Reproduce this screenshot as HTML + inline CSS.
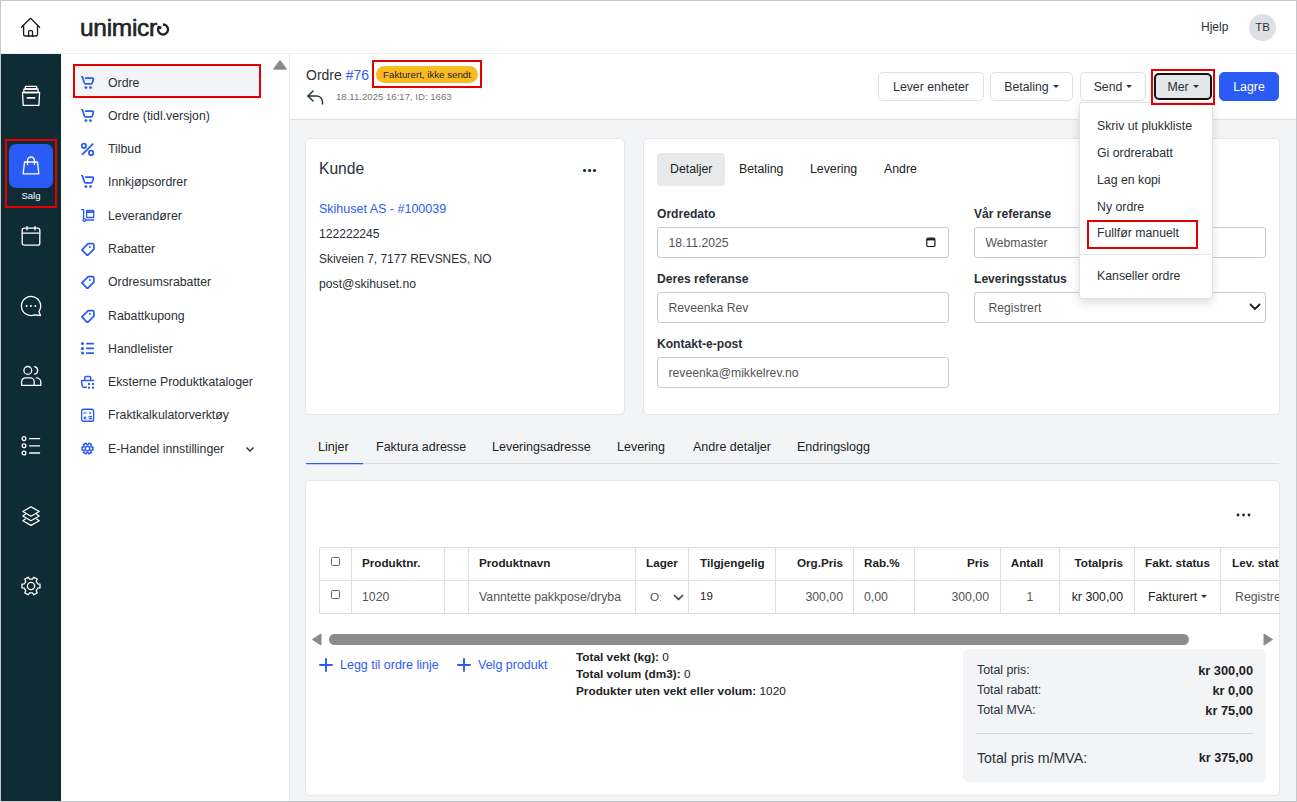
<!DOCTYPE html>
<html><head><meta charset="utf-8"><style>
*{box-sizing:border-box;margin:0;padding:0}
html,body{width:1297px;height:802px;overflow:hidden;background:#fff}
body{font-family:"Liberation Sans",sans-serif;color:#222;position:relative;font-size:13px}
.a{position:absolute;white-space:nowrap}
#frame{position:absolute;left:0;top:0;width:1297px;height:802px;border:1px solid #c5c9ce;z-index:100;pointer-events:none}
.mi{position:absolute;font-size:12.3px;color:#2b2f36;white-space:nowrap}
.card{position:absolute;background:#fff;border:1px solid #e4e6e9;border-radius:5px}
.btn{position:absolute;top:72px;height:29px;background:#fff;border:1px solid #dcdfe3;border-radius:5px;font-size:12.3px;color:#2b2f36;text-align:center;line-height:28px;white-space:nowrap}
.car{display:inline-block;width:0;height:0;border-left:3px solid transparent;border-right:3px solid transparent;border-top:3.5px solid #333;vertical-align:middle;margin-left:4px;position:relative;top:-1px}
.lbl{position:absolute;font-weight:bold;font-size:12.1px;color:#2b2f36;white-space:nowrap}
.inp{position:absolute;height:31px;border:1px solid #cacccf;border-radius:3px;background:#fff;font-size:12.2px;color:#555;padding-left:10.5px;line-height:30px;white-space:nowrap}
.th{position:absolute;font-weight:bold;font-size:11.7px;color:#222;white-space:nowrap}
.td{position:absolute;font-size:12.3px;color:#555;white-space:nowrap}
.dd{position:absolute;left:1097px;font-size:12.3px;color:#2b2f36;white-space:nowrap}
.vl{position:absolute;width:1px;background:#dedede}
.hl{position:absolute;height:1px;background:#dedede}
.cb{position:absolute;width:9px;height:9px;border:1px solid #666;border-radius:1.5px;background:#fff}
</style></head><body>
<div id="frame"></div>
<div class="a" style="left:0;top:0;width:1297px;height:54px;background:#fff;border-bottom:1px solid #eceef0"></div>
<svg class="a" style="left:15px;top:12px" width="32" height="30" viewBox="15 12 32 30" fill="none" stroke="#1a1a1a" stroke-width="1.3" stroke-linejoin="round" stroke-linecap="round"><path d="M21.4 27.2 L30.5 18.3 L39.6 27.2"/><path d="M23.6 25.6 V34.6 Q23.6 36 25 36 H36.1 Q37.5 36 37.5 34.6 V25.6"/><path d="M28.6 36 V31.6 Q28.6 30.6 29.6 30.6 H31.5 Q32.5 30.6 32.5 31.6 V36"/></svg>
<div class="a" style="left:80px;top:14px;font-size:24.5px;color:#222;letter-spacing:-0.3px;-webkit-text-stroke:0.6px #222">unimicr</div>
<svg class="a" style="left:156px;top:22px" width="15" height="15" viewBox="0 0 15 15" fill="none" stroke="#222" stroke-width="2.4"><path d="M7 2.5 A5 5 0 1 1 2.67 5 L5.4 6"/></svg>
<div class="a" style="left:1201px;top:20px;font-size:12px;color:#2b2f36">Hjelp</div>
<div class="a" style="left:1249px;top:14px;width:27px;height:27px;border-radius:50%;background:#dde1e6;font-size:11.5px;color:#333;text-align:center;line-height:27px">TB</div>
<div class="a" style="left:1px;top:54px;width:60px;height:748px;background:#0f2b34"></div>
<svg class="a" style="left:15px;top:80px" width="32" height="32" viewBox="15 80 32 32" fill="none" stroke="#fff" stroke-width="1.3" stroke-linejoin="round" stroke-linecap="round"><rect x="25.3" y="86.4" width="11.4" height="2.6" rx="0.7"/><rect x="23.9" y="89" width="14.2" height="3.5" rx="0.7"/><path d="M22.5 92.5 H39.6 L38.9 105.4 H23.2 Z"/><path d="M27.4 97.9 H34.6" stroke-width="1.6"/></svg>
<div class="a" style="left:9px;top:144px;width:44px;height:44px;background:#2a5cf5;border-radius:7px"></div>
<svg class="a" style="left:22px;top:155px" width="18" height="20" viewBox="0 0 18 20" fill="none" stroke="#fff" stroke-width="1.3" stroke-linejoin="round" stroke-linecap="round"><path d="M2.5 7 H15.5 L16.8 18.8 H1.2 Z"/><path d="M5.5 9.5 V5.5 A3.5 3.5 0 0 1 12.5 5.5 V9.5"/></svg>
<div class="a" style="left:0;top:190px;width:62px;text-align:center;font-size:9.5px;color:#fff">Salg</div>
<svg class="a" style="left:21px;top:226px" width="20" height="20" viewBox="0 0 20 20" fill="none" stroke="#fff" stroke-width="1.3" stroke-linejoin="round" stroke-linecap="round"><rect x="1.2" y="2.2" width="17.6" height="17" rx="2"/><path d="M1.2 7.2 H18.8 M6 0.6 V3.8 M14 0.6 V3.8"/></svg>
<svg class="a" style="left:15px;top:290px" width="32" height="32" viewBox="15 290 32 32" fill="none" stroke="#fff" stroke-width="1.3" stroke-linejoin="round" stroke-linecap="round"><path d="M38.9 311.5 A9.6 9.6 0 1 0 34.6 314.9 L40.5 315.5 Z"/><g fill="#fff" stroke="none"><circle cx="26.6" cy="306" r="1"/><circle cx="31" cy="306" r="1"/><circle cx="35.4" cy="306" r="1"/></g></svg>
<svg class="a" style="left:15px;top:360px" width="32" height="32" viewBox="15 360 32 32" fill="none" stroke="#fff" stroke-width="1.3" stroke-linejoin="round" stroke-linecap="round"><circle cx="27.8" cy="370.4" r="3.9"/><path d="M34.6 366.6 A3.9 3.9 0 0 1 34.6 374.2"/><path d="M21.6 385.3 V381.8 A3.9 3.9 0 0 1 25.5 377.9 H30.3 A3.9 3.9 0 0 1 34.2 381.8 V385.3 Z"/><path d="M36.4 377.9 A4.4 4.4 0 0 1 40.8 382.3 V385.3 H34.2"/></svg>
<svg class="a" style="left:21px;top:436px" width="20" height="20" viewBox="0 0 20 20" fill="none" stroke="#fff" stroke-width="1.3" stroke-linejoin="round" stroke-linecap="round"><circle cx="3" cy="2.6" r="1.9"/><circle cx="3" cy="9.8" r="1.9"/><circle cx="3" cy="17" r="1.9"/><path d="M8.6 2.6 H18.6 M8.6 9.8 H18.6 M8.6 17 H18.6"/></svg>
<svg class="a" style="left:22px;top:506px" width="18" height="21" viewBox="0 0 18 21" fill="none" stroke="#fff" stroke-width="1.3" stroke-linejoin="round" stroke-linecap="round"><path d="M9 0.8 L17.2 5.5 L9 10.2 L0.8 5.5 Z"/><path d="M3.3 8.3 L0.8 10 L9 14.7 L17.2 10 L14.7 8.3"/><path d="M3.3 13 L0.8 14.7 L9 19.4 L17.2 14.7 L14.7 13"/></svg>
<svg class="a" style="left:15px;top:570px" width="32" height="32" viewBox="15 570 32 32" fill="none" stroke="#fff" stroke-width="1.3" stroke-linejoin="round"><path d="M37.64 588.23 L40.00 587.92 L40.00 584.08 L37.64 583.77 L36.25 581.37 L37.16 579.17 L33.84 577.25 L32.39 579.14 L29.61 579.14 L28.16 577.25 L24.84 579.17 L25.75 581.37 L24.36 583.77 L22.00 584.08 L22.00 587.92 L24.36 588.23 L25.75 590.63 L24.84 592.83 L28.16 594.75 L29.61 592.86 L32.39 592.86 L33.84 594.75 L37.16 592.83 L36.25 590.63 Z"/><circle cx="31" cy="586" r="3.6"/></svg>
<div class="a" style="left:61px;top:54px;width:229px;height:748px;background:#fff;border-right:1px solid #e5e7eb"></div>
<div class="a" style="left:75px;top:66px;width:184px;height:30px;background:#f3f4f6"></div>
<div class="a" style="left:81px;top:76px;width:14px;height:14px;line-height:0"><svg width="14" height="14" viewBox="0 0 14 14" fill="none" stroke="#2a5bf0" stroke-width="1.7" stroke-linecap="round" stroke-linejoin="round"><path d="M0.5 0.5 Q1.2 0.5 1.6 1.3 L3.4 7 Q3.7 7.8 4.5 7.8 H10.2 Q11 7.8 11.3 7 L12.3 3.6 Q12.6 2.1 11.2 2.1 H4.6"/><circle cx="4.9" cy="11.6" r="1.45" fill="#2a5bf0" stroke="none"/><circle cx="9.5" cy="11.6" r="1.45" fill="#2a5bf0" stroke="none"/></svg></div>
<div class="mi" style="left:108px;top:76px">Ordre</div>
<div class="a" style="left:81px;top:109px;width:14px;height:14px;line-height:0"><svg width="14" height="14" viewBox="0 0 14 14" fill="none" stroke="#2a5bf0" stroke-width="1.7" stroke-linecap="round" stroke-linejoin="round"><path d="M0.5 0.5 Q1.2 0.5 1.6 1.3 L3.4 7 Q3.7 7.8 4.5 7.8 H10.2 Q11 7.8 11.3 7 L12.3 3.6 Q12.6 2.1 11.2 2.1 H4.6"/><circle cx="4.9" cy="11.6" r="1.45" fill="#2a5bf0" stroke="none"/><circle cx="9.5" cy="11.6" r="1.45" fill="#2a5bf0" stroke="none"/></svg></div>
<div class="mi" style="left:108px;top:109px">Ordre (tidl.versjon)</div>
<div class="a" style="left:81px;top:142px;width:14px;height:14px;line-height:0"><svg width="14" height="14" viewBox="0 0 14 14" fill="none" stroke="#2a5bf0" stroke-width="1.8"><path d="M0.9 12.8 L12.2 1.6"/><circle cx="2.9" cy="3.8" r="2.2"/><circle cx="10.1" cy="10.9" r="2.2"/></svg></div>
<div class="mi" style="left:108px;top:142px">Tilbud</div>
<div class="a" style="left:81px;top:175px;width:14px;height:14px;line-height:0"><svg width="14" height="14" viewBox="0 0 14 14" fill="none" stroke="#2a5bf0" stroke-width="1.7" stroke-linecap="round" stroke-linejoin="round"><path d="M0.5 0.5 Q1.2 0.5 1.6 1.3 L3.4 7 Q3.7 7.8 4.5 7.8 H10.2 Q11 7.8 11.3 7 L12.3 3.6 Q12.6 2.1 11.2 2.1 H4.6"/><circle cx="4.9" cy="11.6" r="1.45" fill="#2a5bf0" stroke="none"/><circle cx="9.5" cy="11.6" r="1.45" fill="#2a5bf0" stroke="none"/></svg></div>
<div class="mi" style="left:108px;top:175px">Innkjøpsordrer</div>
<div class="a" style="left:81px;top:209px;width:14px;height:14px;line-height:0"><svg width="14" height="14" viewBox="0 0 14 14" fill="none" stroke="#2a5bf0" stroke-width="1.3" stroke-linejoin="round" stroke-linecap="round"><path d="M0.5 0.5 H2.6 V9.6"/><circle cx="3.3" cy="11" r="1.35"/><path d="M4.8 11 H12.7"/><rect x="5.6" y="1.5" width="7.1" height="7" rx="0.6"/><path d="M5.6 3.1 H12.7" stroke-width="1.6"/></svg></div>
<div class="mi" style="left:108px;top:209px">Leverandører</div>
<div class="a" style="left:81px;top:242px;width:14px;height:14px;line-height:0"><svg width="14" height="14" viewBox="0 0 14 14" fill="none" stroke="#2a5bf0" stroke-width="1.7" stroke-linejoin="round"><path d="M0.9 7.8 L7.2 1.6 H11.6 Q12.9 1.6 12.9 2.9 V7.2 L6.4 13.6 Z"/><circle cx="8.9" cy="4.9" r="1" fill="#2a5bf0" stroke="none"/></svg></div>
<div class="mi" style="left:108px;top:242px">Rabatter</div>
<div class="a" style="left:81px;top:275px;width:14px;height:14px;line-height:0"><svg width="14" height="14" viewBox="0 0 14 14" fill="none" stroke="#2a5bf0" stroke-width="1.7" stroke-linejoin="round"><path d="M0.9 7.8 L7.2 1.6 H11.6 Q12.9 1.6 12.9 2.9 V7.2 L6.4 13.6 Z"/><circle cx="8.9" cy="4.9" r="1" fill="#2a5bf0" stroke="none"/></svg></div>
<div class="mi" style="left:108px;top:275px">Ordresumsrabatter</div>
<div class="a" style="left:81px;top:309px;width:14px;height:14px;line-height:0"><svg width="14" height="14" viewBox="0 0 14 14" fill="none" stroke="#2a5bf0" stroke-width="1.7" stroke-linejoin="round"><path d="M0.9 7.8 L7.2 1.6 H11.6 Q12.9 1.6 12.9 2.9 V7.2 L6.4 13.6 Z"/><circle cx="8.9" cy="4.9" r="1" fill="#2a5bf0" stroke="none"/></svg></div>
<div class="mi" style="left:108px;top:309px">Rabattkupong</div>
<div class="a" style="left:81px;top:342px;width:14px;height:14px;line-height:0"><svg width="14" height="14" viewBox="0 0 14 14" fill="#2a5bf0"><circle cx="1.5" cy="1.6" r="1.5"/><circle cx="1.5" cy="6.4" r="1.5"/><circle cx="1.5" cy="11.1" r="1.5"/><rect x="5.1" y="0.8" width="7.8" height="1.8" rx="0.3"/><rect x="5.1" y="5.5" width="7.8" height="1.8" rx="0.3"/><rect x="5.1" y="10.2" width="7.8" height="1.8" rx="0.3"/></svg></div>
<div class="mi" style="left:108px;top:342px">Handlelister</div>
<div class="a" style="left:81px;top:375px;width:14px;height:14px;line-height:0"><svg width="14" height="14" viewBox="0 0 14 14" fill="none" stroke="#2a5bf0" stroke-width="1.4" stroke-linejoin="round" stroke-linecap="round"><path d="M3.8 5.5 V2.6 Q3.8 1.5 4.9 1.5 H8.6 Q9.7 1.5 9.7 2.6 V5.5 M0.5 5.5 H12.7 M0.5 5.5 L1.3 11.4 Q1.5 12.2 2.3 12.2 H5.4"/><g fill="#2a5bf0" stroke="none"><rect x="7" y="8" width="2" height="2"/><rect x="11" y="8" width="2" height="2"/><rect x="7" y="11.7" width="2" height="2"/><rect x="11" y="11.7" width="2" height="2"/></g></svg></div>
<div class="mi" style="left:108px;top:375px">Eksterne Produktkataloger</div>
<div class="a" style="left:81px;top:408px;width:14px;height:14px;line-height:0"><svg width="14" height="14" viewBox="0 0 14 14" fill="none" stroke="#2a5bf0" stroke-width="1.4"><rect x="0.6" y="1.3" width="12" height="11.9" rx="1.8"/><path d="M2.2 5 H5.6 M3.9 8.3 V11.7 M2.2 10 H5.6 M7.6 8.6 H11 M7.6 10.6 H11" stroke-width="1.2"/><rect x="8.2" y="4.2" width="1.7" height="1.7" fill="#2a5bf0" stroke="none"/></svg></div>
<div class="mi" style="left:108px;top:408px">Fraktkalkulatorverktøy</div>
<div class="a" style="left:81px;top:442px;width:14px;height:14px;line-height:0"><svg width="14" height="14" viewBox="0 0 14 14" fill="none" stroke="#2a5bf0" stroke-width="1.5" stroke-linejoin="round"><path d="M10.27 8.11 L11.93 7.89 L11.93 5.11 L10.27 4.89 L9.78 4.04 L10.41 2.49 L8.01 1.11 L6.99 2.43 L6.01 2.43 L4.99 1.11 L2.59 2.49 L3.22 4.04 L2.73 4.89 L1.07 5.11 L1.07 7.89 L2.73 8.11 L3.22 8.96 L2.59 10.51 L4.99 11.89 L6.01 10.57 L6.99 10.57 L8.01 11.89 L10.41 10.51 L9.78 8.96 Z"/><circle cx="6.5" cy="6.5" r="2.3"/></svg></div>
<div class="mi" style="left:108px;top:442px">E-Handel innstillinger</div>
<svg class="a" style="left:245px;top:446px" width="10" height="7" viewBox="0 0 10 7" fill="none" stroke="#333" stroke-width="1.5"><path d="M1.5 1.5 L5 5 L8.5 1.5"/></svg>
<svg class="a" style="left:273px;top:60px" width="14" height="10" viewBox="0 0 14 10"><path d="M7 1 L13 9 H1 Z" fill="#8a8a8a" stroke="#8a8a8a" stroke-width="1.5" stroke-linejoin="round"/></svg>
<div class="a" style="left:290px;top:54px;width:1007px;height:748px;background:#f3f4f6"></div>
<div class="a" style="left:290px;top:54px;width:1007px;height:66px;background:#fff;border-bottom:1px solid #dde0e4"></div>
<div class="a" style="left:306px;top:67px;font-size:14px;color:#2b2f36">Ordre <span style="color:#2d5cf2">#76</span></div>
<div class="a" style="left:376px;top:66px;width:102px;height:17px;border-radius:9px;background:#fabb22;font-size:9.7px;color:#222;text-align:center;line-height:17px">Fakturert, ikke sendt</div>
<svg class="a" style="left:307px;top:90px" width="17" height="15" viewBox="0 0 17 15" fill="none" stroke="#1f3a40" stroke-width="1.5" stroke-linecap="round" stroke-linejoin="round"><path d="M6 1 L1 6 L6 11"/><path d="M1 6 H9 A6 6 0 0 1 15.5 12 V14"/></svg>
<div class="a" style="left:336px;top:91px;font-size:9.6px;color:#777">18.11.2025 16:17, ID: 1663</div>
<div class="btn" style="left:878px;width:106px">Lever enheter</div>
<div class="btn" style="left:990px;width:83px">Betaling<span class="car"></span></div>
<div class="btn" style="left:1080px;width:66px">Send<span class="car"></span></div>
<div class="btn" style="left:1154px;top:73px;width:58px;height:27px;border:2px solid #111;background:#e4e6e8;line-height:24px">Mer<span class="car"></span></div>
<div class="btn" style="left:1219px;width:60px;background:#2a5cf5;border-color:#2a5cf5;color:#fff">Lagre</div>
<div class="card" style="left:305px;top:138px;width:320px;height:277px"></div>
<div class="a" style="left:319px;top:160px;font-size:15.6px;color:#2b2f36">Kunde</div>
<svg class="a" style="left:582px;top:168px" width="15" height="5" viewBox="0 0 15 5" fill="#0f2b34"><circle cx="2.55" cy="2.5" r="1.6"/><circle cx="7.6" cy="2.5" r="1.6"/><circle cx="12.5" cy="2.5" r="1.6"/></svg>
<div class="a" style="left:319px;top:202px;font-size:12.5px;color:#2d5cf2">Skihuset AS - #100039</div>
<div class="a" style="left:319px;top:227px;font-size:12.1px;color:#2b2f36">122222245</div>
<div class="a" style="left:319px;top:252px;font-size:11.9px;color:#2b2f36">Skiveien 7, 7177 REVSNES, NO</div>
<div class="a" style="left:319px;top:277px;font-size:12.2px;color:#2b2f36">post@skihuset.no</div>
<div class="card" style="left:643px;top:138px;width:637px;height:277px"></div>
<div class="a" style="left:657px;top:153px;width:68px;height:33px;background:#e8e9eb;border-radius:4px"></div>
<div class="a" style="left:670px;top:162px;font-size:12.3px;color:#222">Detaljer</div>
<div class="a" style="left:739px;top:162px;font-size:12.3px;color:#222">Betaling</div>
<div class="a" style="left:810px;top:162px;font-size:12.3px;color:#222">Levering</div>
<div class="a" style="left:884px;top:162px;font-size:12.3px;color:#222">Andre</div>
<div class="lbl" style="left:657px;top:207px">Ordredato</div>
<div class="inp" style="left:657px;top:227px;width:292px;color:#555">18.11.2025</div>
<svg class="a" style="left:926px;top:237px" width="10" height="10" viewBox="0 0 10 10" fill="none" stroke="#1a1a1a" stroke-width="1.2"><rect x="0.8" y="1.2" width="8.1" height="8.3" rx="1.3"/><path d="M0.8 2.4 H8.9" stroke-width="2"/></svg>
<div class="lbl" style="left:657px;top:272px">Deres referanse</div>
<div class="inp" style="left:657px;top:292px;width:292px">Reveenka Rev</div>
<div class="lbl" style="left:657px;top:337px">Kontakt-e-post</div>
<div class="inp" style="left:657px;top:357px;width:292px">reveenka@mikkelrev.no</div>
<div class="lbl" style="left:974px;top:207px">Vår referanse</div>
<div class="inp" style="left:974px;top:227px;width:292px">Webmaster</div>
<div class="lbl" style="left:974px;top:272px">Leveringsstatus</div>
<div class="inp" style="left:974px;top:292px;width:292px;padding-left:13.5px">Registrert</div>
<svg class="a" style="left:1249px;top:303px" width="12" height="8" viewBox="0 0 12 8" fill="none" stroke="#222" stroke-width="1.8" stroke-linecap="round" stroke-linejoin="round"><path d="M1.5 1.5 L6 6 L10.5 1.5"/></svg>
<div class="a" style="left:306px;top:463px;width:973px;height:1px;background:#d9dce0"></div>
<div class="a" style="left:306px;top:463px;width:57px;height:1px;background:#2a5bf5;box-shadow:0 0.5px 0 rgba(42,91,245,0.5)"></div>
<div class="a" style="left:318px;top:440px;font-size:12.5px;color:#222">Linjer</div>
<div class="a" style="left:376px;top:440px;font-size:12.5px;color:#222">Faktura adresse</div>
<div class="a" style="left:492px;top:440px;font-size:12.5px;color:#222">Leveringsadresse</div>
<div class="a" style="left:617px;top:440px;font-size:12.5px;color:#222">Levering</div>
<div class="a" style="left:693px;top:440px;font-size:12.5px;color:#222">Andre detaljer</div>
<div class="a" style="left:797px;top:440px;font-size:12.5px;color:#222">Endringslogg</div>
<div class="card" style="left:305px;top:480px;width:975px;height:316px;overflow:hidden">
</div>
<div class="a" style="left:1236px;top:513px;width:15px;height:4px;line-height:0"><svg width="15" height="4" viewBox="0 0 15 4" fill="#222"><circle cx="2" cy="2" r="1.4"/><circle cx="7.5" cy="2" r="1.4"/><circle cx="13" cy="2" r="1.4"/></svg></div>
<div class="a" style="left:319px;top:547px;width:960px;height:67px;overflow:hidden">
<div class="vl" style="left:0px;top:0;height:67px"></div>
<div class="vl" style="left:32px;top:0;height:67px"></div>
<div class="vl" style="left:125px;top:0;height:67px"></div>
<div class="vl" style="left:149px;top:0;height:67px"></div>
<div class="vl" style="left:316px;top:0;height:67px"></div>
<div class="vl" style="left:369px;top:0;height:67px"></div>
<div class="vl" style="left:456px;top:0;height:67px"></div>
<div class="vl" style="left:534px;top:0;height:67px"></div>
<div class="vl" style="left:595px;top:0;height:67px"></div>
<div class="vl" style="left:681px;top:0;height:67px"></div>
<div class="vl" style="left:740px;top:0;height:67px"></div>
<div class="vl" style="left:815px;top:0;height:67px"></div>
<div class="vl" style="left:901px;top:0;height:67px"></div>
<div class="vl" style="left:981px;top:0;height:67px"></div>
<div class="hl" style="left:0;top:0px;width:1000px"></div>
<div class="hl" style="left:0;top:33px;width:1000px"></div>
<div class="hl" style="left:0;top:66px;width:1000px"></div>
</div>
<div class="cb" style="left:331px;top:557px"></div>
<div class="cb" style="left:331px;top:590px"></div>
<div class="a" style="left:0;top:0;width:1279px;height:802px;overflow:hidden">
<div class="th" style="left:362px;top:556px;">Produktnr.</div>
<div class="th" style="left:479px;top:556px;">Produktnavn</div>
<div class="th" style="left:646px;top:556px;">Lager</div>
<div class="th" style="left:700px;top:556px;">Tilgjengelig</div>
<div class="th" style="left:543px;width:300px;text-align:right;top:556px;">Org.Pris</div>
<div class="th" style="left:864px;top:556px;">Rab.%</div>
<div class="th" style="left:689px;width:300px;text-align:right;top:556px;">Pris</div>
<div class="th" style="left:877px;width:300px;text-align:center;top:556px;">Antall</div>
<div class="th" style="left:823px;width:300px;text-align:right;top:556px;">Totalpris</div>
<div class="th" style="left:1145px;top:556px;">Fakt. status</div>
<div class="th" style="left:1232px;top:556px;">Lev. status</div>
<div class="td" style="left:362px;top:590px;">1020</div>
<div class="td" style="left:479px;top:590px;">Vanntette pakkpose/dryba</div>
<div class="td" style="left:700px;top:590px;color:#222;"><span style="font-size:11.5px;position:relative;top:-1px">19</span></div>
<div class="td" style="left:543px;width:300px;text-align:right;top:590px;">300,00</div>
<div class="td" style="left:864px;top:590px;">0,00</div>
<div class="td" style="left:689px;width:300px;text-align:right;top:590px;">300,00</div>
<div class="td" style="left:880px;width:300px;text-align:center;top:590px;">1</div>
<div class="td" style="left:823px;width:300px;text-align:right;top:590px;color:#222;">kr 300,00</div>
<div class="td" style="left:1148px;top:590px;color:#222;">Fakturert<span class="car"></span></div>
<div class="td" style="left:1235px;top:590px;">Registrert</div>
</div>
<div class="td" style="left:650px;top:590px;width:11px;overflow:hidden;font-size:11.8px">O:</div>
<svg class="a" style="left:673px;top:594px" width="11" height="7" viewBox="0 0 11 7" fill="none" stroke="#444" stroke-width="1.7" stroke-linecap="round" stroke-linejoin="round"><path d="M1.5 1.5 L5.5 5.5 L9.5 1.5"/></svg>
<svg class="a" style="left:311px;top:633px" width="11" height="13" viewBox="0 0 11 13"><path d="M10 1 V12 L1.5 6.5 Z" fill="#8a8a8a" stroke="#8a8a8a" stroke-linejoin="round"/></svg>
<div class="a" style="left:329px;top:634px;width:860px;height:11px;border-radius:6px;background:#8c8c8c"></div>
<svg class="a" style="left:1263px;top:633px" width="11" height="13" viewBox="0 0 11 13"><path d="M1 1 V12 L9.5 6.5 Z" fill="#8a8a8a" stroke="#8a8a8a" stroke-linejoin="round"/></svg>
<div class="a" style="left:319px;top:658px;line-height:0"><svg width="14" height="14" viewBox="0 0 14 14" fill="none" stroke="#2a5bf0" stroke-width="1.9" stroke-linecap="round"><path d="M7 1 V13 M1 7 H13"/></svg></div>
<div class="a" style="left:340px;top:658px;font-size:12.5px;color:#2d5cf2">Legg til ordre linje</div>
<div class="a" style="left:457px;top:658px;line-height:0"><svg width="14" height="14" viewBox="0 0 14 14" fill="none" stroke="#2a5bf0" stroke-width="1.9" stroke-linecap="round"><path d="M7 1 V13 M1 7 H13"/></svg></div>
<div class="a" style="left:478px;top:658px;font-size:12.5px;color:#2d5cf2">Velg produkt</div>
<div class="a" style="left:576px;top:650px;font-size:11.8px;color:#222"><b>Total vekt (kg):</b> 0</div>
<div class="a" style="left:576px;top:667px;font-size:11.8px;color:#222"><b>Total volum (dm3):</b> 0</div>
<div class="a" style="left:576px;top:684px;font-size:11.8px;color:#222"><b>Produkter uten vekt eller volum:</b> 1020</div>
<div class="a" style="left:963px;top:649px;width:303px;height:133px;background:#f3f4f6;border-radius:6px"></div>
<div class="a" style="left:977px;top:663px;font-size:12.3px;color:#2b2f36">Total pris:</div>
<div class="a" style="left:1053px;width:200px;text-align:right;top:663px;font-size:12.8px;font-weight:bold;color:#222">kr 300,00</div>
<div class="a" style="left:977px;top:683px;font-size:12.3px;color:#2b2f36">Total rabatt:</div>
<div class="a" style="left:1053px;width:200px;text-align:right;top:683px;font-size:12.8px;font-weight:bold;color:#222">kr 0,00</div>
<div class="a" style="left:977px;top:703px;font-size:12.3px;color:#2b2f36">Total MVA:</div>
<div class="a" style="left:1053px;width:200px;text-align:right;top:703px;font-size:12.8px;font-weight:bold;color:#222">kr 75,00</div>
<div class="a" style="left:976px;top:733px;width:277px;height:1px;background:#d5d9de"></div>
<div class="a" style="left:977px;top:750px;font-size:14.2px;color:#2b2f36">Total pris m/MVA:</div>
<div class="a" style="left:1053px;width:200px;text-align:right;top:751px;font-size:12.7px;font-weight:bold;color:#222">kr 375,00</div>
<div class="a" style="left:1079px;top:102px;width:134px;height:197px;background:#fff;border:1px solid #e0e3e7;border-radius:3px;box-shadow:0 4px 10px rgba(0,0,0,0.13)"></div>
<div class="dd" style="top:119px">Skriv ut plukkliste</div>
<div class="dd" style="top:146px">Gi ordrerabatt</div>
<div class="dd" style="top:173px">Lag en kopi</div>
<div class="dd" style="top:200px">Ny ordre</div>
<div class="dd" style="top:226px">Fullfør manuelt</div>
<div class="dd" style="top:269px">Kanseller ordre</div>
<div class="a" style="left:1080px;top:254px;width:132px;height:1px;background:#e3e5e8"></div>
<div class="a" style="left:5px;top:139px;width:52px;height:69px;border:2px solid #e40000"></div>
<div class="a" style="left:73px;top:64px;width:188px;height:34px;border:2px solid #e40000"></div>
<div class="a" style="left:372px;top:60px;width:110px;height:28px;border:2px solid #e40000"></div>
<div class="a" style="left:1151px;top:69px;width:64px;height:36px;border:2px solid #e40000"></div>
<div class="a" style="left:1087px;top:220px;width:111px;height:29px;border:2px solid #e40000"></div>
</body></html>
